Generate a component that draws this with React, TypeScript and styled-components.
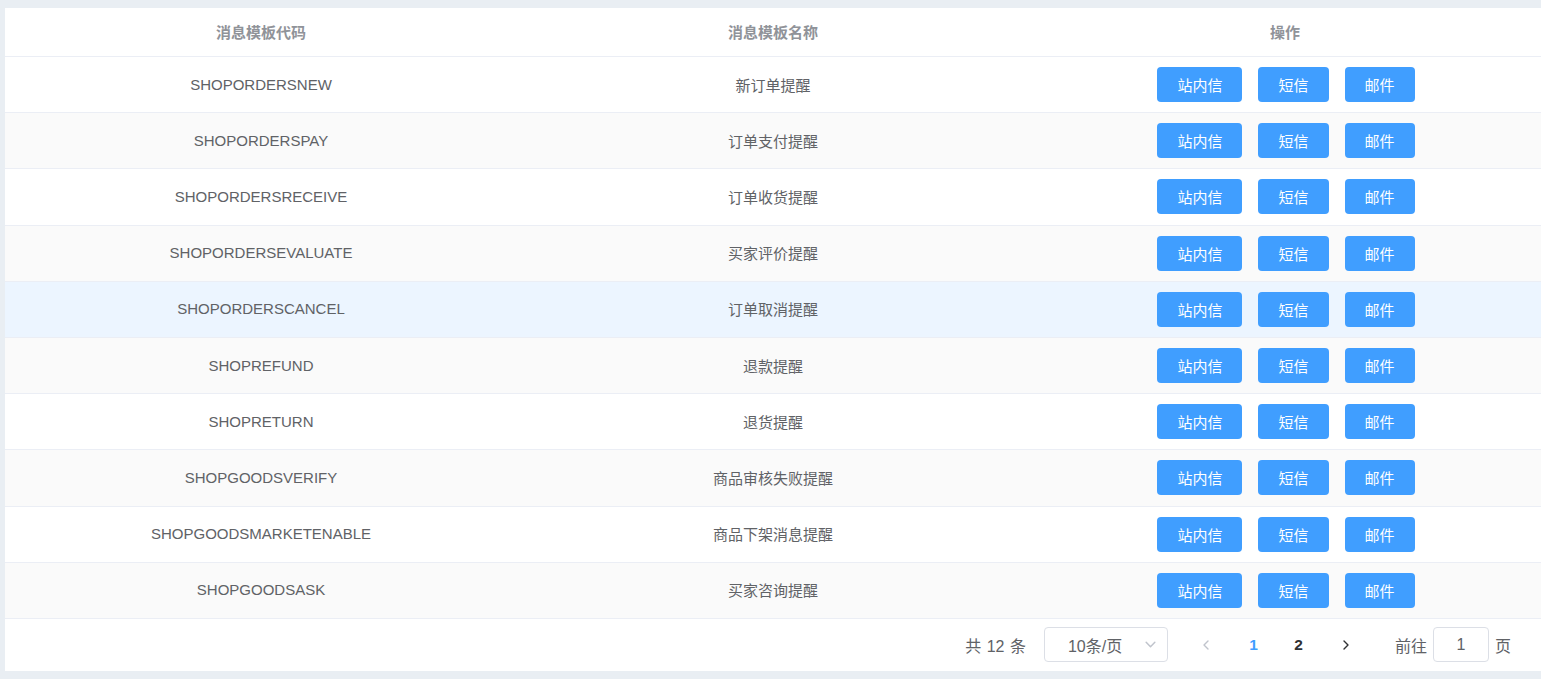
import React from "react";
import styled, { createGlobalStyle } from "styled-components";

const Global = createGlobalStyle`
  html, body { margin: 0; padding: 0; background: #e9eef3; }
  body { font-family: "Liberation Sans", "Noto Sans CJK SC", sans-serif; }
  * { box-sizing: border-box; }
`;

const Page = styled.div`
  padding: 8px 0 8px 5px;
  background: #e9eef3;
`;

const Card = styled.div`
  background: #fff;
`;

const HeadRow = styled.div`
  display: grid;
  grid-template-columns: 1fr 1fr 1fr;
  height: 49px;
  border-bottom: 1px solid #ebeef5;
  align-items: center;
`;

const HeadCell = styled.div`
  text-align: center;
  font-size: 15px;
  font-weight: bold;
  color: #909399;
  padding-bottom: 2px;
`;

const Row = styled.div<{ $bg: string }>`
  display: grid;
  grid-template-columns: 1fr 1fr 1fr;
  height: 56.2px;
  border-bottom: 1px solid #ebeef5;
  align-items: center;
  background: ${(p) => p.$bg};
`;

const Cell = styled.div`
  text-align: center;
  font-size: 15px;
  color: #606266;
  padding-bottom: 1px;
`;

const Actions = styled.div`
  display: flex;
  justify-content: center;
  gap: 16px;
  padding-left: 2px;
`;

const Btn = styled.button`
  height: 35px;
  padding: 0 20px;
  border: none;
  border-radius: 4px;
  background: #409eff;
  color: #fff;
  font-family: "Noto Sans CJK SC", sans-serif;
  font-size: 15px;
  cursor: pointer;
  display: flex;
  align-items: center;
`;

const Pager = styled.div`
  height: 52px;
  display: flex;
  align-items: center;
  justify-content: flex-end;
  padding-right: 30px;
  font-size: 16px;
  color: #606266;
  font-family: "Liberation Sans", "Noto Sans CJK SC", sans-serif;
`;

const Total = styled.span`
  margin-right: 18px;
  word-spacing: 1px;
`;

const Select = styled.div`
  width: 124px;
  height: 35px;
  border: 1px solid #dcdfe6;
  border-radius: 4px;
  display: flex;
  align-items: center;
  padding-left: 23px;
  padding-right: 10px;
  justify-content: space-between;
  color: #606266;
  margin-right: 19px;
`;

const NavBtn = styled.div<{ $color: string }>`
  width: 38px;
  height: 35px;
  display: flex;
  align-items: center;
  justify-content: center;
  color: ${(p) => p.$color};
`;

const PageNum = styled.div<{ $active?: boolean }>`
  width: 45px;
  height: 35px;
  display: flex;
  align-items: center;
  justify-content: center;
  font-weight: bold;
  font-size: 15.5px;
  color: ${(p) => (p.$active ? "#409eff" : "#303133")};
`;

const PageList = styled.div`
  display: flex;
  margin: 0 6px;
`;

const Jumper = styled.div`
  display: flex;
  align-items: center;
  margin-left: 30px;
`;

const JumpInput = styled.div`
  width: 56px;
  height: 35px;
  border: 1px solid #dcdfe6;
  border-radius: 4px;
  display: flex;
  align-items: center;
  justify-content: center;
  margin: 0 6px 0 6px;
  color: #606266;
`;

const rows: [string, string][] = [
  ["SHOPORDERSNEW", "新订单提醒"],
  ["SHOPORDERSPAY", "订单支付提醒"],
  ["SHOPORDERSRECEIVE", "订单收货提醒"],
  ["SHOPORDERSEVALUATE", "买家评价提醒"],
  ["SHOPORDERSCANCEL", "订单取消提醒"],
  ["SHOPREFUND", "退款提醒"],
  ["SHOPRETURN", "退货提醒"],
  ["SHOPGOODSVERIFY", "商品审核失败提醒"],
  ["SHOPGOODSMARKETENABLE", "商品下架消息提醒"],
  ["SHOPGOODSASK", "买家咨询提醒"],
];

const Chevron = ({ dir, size = 12 }: { dir: "left" | "right" | "down"; size?: number }) => {
  const d =
    dir === "left" ? "M8 2 L4 6 L8 10" : dir === "right" ? "M4 2 L8 6 L4 10" : "M2 4 L6 8 L10 4";
  return (
    <svg width={size} height={size} viewBox="0 0 12 12" fill="none">
      <path d={d} stroke="currentColor" strokeWidth="1.4" strokeLinecap="round" strokeLinejoin="round" />
    </svg>
  );
};

export default function App() {
  return (
    <Page>
      <Global />
      <Card>
        <HeadRow>
          <HeadCell>消息模板代码</HeadCell>
          <HeadCell>消息模板名称</HeadCell>
          <HeadCell>操作</HeadCell>
        </HeadRow>
        {rows.map(([code, name], i) => (
          <Row key={code} $bg={i === 4 ? "#ecf5ff" : i % 2 === 1 ? "#fafafa" : "#fff"}>
            <Cell>{code}</Cell>
            <Cell>{name}</Cell>
            <Actions>
              <Btn>站内信</Btn>
              <Btn>短信</Btn>
              <Btn>邮件</Btn>
            </Actions>
          </Row>
        ))}
        <Pager>
          <Total>共 12 条</Total>
          <Select>
            <span>10条/页</span>
            <span style={{ color: "#c0c4cc", display: "flex" }}>
              <Chevron dir="down" size={13} />
            </span>
          </Select>
          <NavBtn $color="#c0c4cc">
            <Chevron dir="left" />
          </NavBtn>
          <PageList>
            <PageNum $active>1</PageNum>
            <PageNum>2</PageNum>
          </PageList>
          <NavBtn $color="#303133">
            <Chevron dir="right" />
          </NavBtn>
          <Jumper>
            前往
            <JumpInput>1</JumpInput>页
          </Jumper>
        </Pager>
      </Card>
    </Page>
  );
}
